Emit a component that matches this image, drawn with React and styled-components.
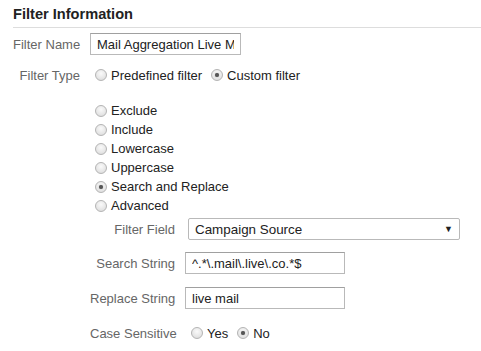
import React from 'react';
import styled, { createGlobalStyle } from 'styled-components';

const GlobalStyle = createGlobalStyle`
  body {
    margin: 0;
    background: #fff;
    font-family: "Liberation Sans", Arial, sans-serif;
  }
`;

const Panel = styled.div`
  padding: 4px 0 0 13px;
  font-size: 13px;
  color: #222;
`;

const Heading = styled.h2`
  margin: 0;
  height: 20px;
  line-height: 20px;
  font-size: 14.6px;
  font-weight: bold;
  color: #222;
  padding-bottom: 3px;
  border-bottom: 1px solid #ddd;
`;

const Row = styled.div`
  display: grid;
  grid-template-columns: ${(p) => p.labelWidth}px 1fr;
  column-gap: 10px;
  align-items: center;
  margin-top: ${(p) => p.top || 0}px;
`;

const Label = styled.label`
  text-align: right;
  color: #666;
  white-space: nowrap;
`;

const TextInput = styled.input`
  box-sizing: border-box;
  width: ${(p) => p.w}px;
  height: 22px;
  margin: 0;
  padding: 0 6px;
  border: 1px solid #b9b9b9;
  border-top-color: #a0a0a0;
  font: inherit;
  color: #222;
  outline: none;
`;

const Options = styled.div`
  display: flex;
  align-items: center;
`;

const RadioList = styled.div`
  display: flex;
  flex-direction: column;
`;

const Option = styled.label`
  display: flex;
  align-items: center;
  height: ${(p) => p.h || 22}px;
  margin-right: ${(p) => p.gap || 0}px;
  color: #222;
  white-space: nowrap;
`;

const Radio = styled.input.attrs({ type: 'radio' })`
  appearance: none;
  box-sizing: border-box;
  width: 12px;
  height: 12px;
  margin: 0 4px 0 ${(p) => p.left ?? 5}px;
  border-radius: 50%;
  border: 1px solid #b4b4b4;
  background: radial-gradient(circle at 50% 35%, #fafafa 0%, #e6e6e6 60%, #d6d6d6 100%);
  position: relative;
  &:checked::after {
    content: '';
    position: absolute;
    left: 3px;
    top: 3px;
    width: 4px;
    height: 4px;
    border-radius: 50%;
    background: #555;
    box-shadow: 0 0 1px #777;
  }
`;

const Sub = styled.div`
  margin-top: 3px;
`;

const SelectBox = styled.div`
  position: relative;
  width: 272px;
  margin-left: 3px;
`;

const Select = styled.select`
  appearance: none;
  box-sizing: border-box;
  width: 100%;
  height: 22px;
  margin: 0;
  padding: 0 6px;
  border: 1px solid #b9b9b9;
  border-radius: 2px;
  background: #fff;
  font: inherit;
  font-size: 13.4px;
  color: #222;
  outline: none;
`;

const Arrow = styled.span`
  position: absolute;
  right: 7px;
  top: 6px;
  font-size: 9px;
  line-height: 10px;
  color: #222;
  pointer-events: none;
`;

const typeOptions = ['Exclude', 'Include', 'Lowercase', 'Uppercase', 'Search and Replace', 'Advanced'];

export default function App() {
  return (
    <>
      <GlobalStyle />
      <Panel>
        <Heading>Filter Information</Heading>

        <Row labelWidth={67} top={5}>
          <Label>Filter Name</Label>
          <TextInput w={151} defaultValue="Mail Aggregation Live Mail" />
        </Row>

        <Row labelWidth={67} top={9}>
          <Label>Filter Type</Label>
          <Options>
            <Option gap={4}><Radio name="ftype" />Predefined filter</Option>
            <Option><Radio name="ftype" defaultChecked />Custom filter</Option>
          </Options>
        </Row>

        <Row labelWidth={67} top={15}>
          <span />
          <div>
            <RadioList>
              {typeOptions.map((o) => (
                <Option key={o} h={19}>
                  <Radio name="custom" defaultChecked={o === 'Search and Replace'} />
                  {o}
                </Option>
              ))}
            </RadioList>

            <Sub>
              <Row labelWidth={85}>
                <Label>Filter Field</Label>
                <SelectBox>
                  <Select defaultValue="Campaign Source">
                    <option>Campaign Source</option>
                    <option>Campaign Medium</option>
                    <option>Campaign Name</option>
                  </Select>
                  <Arrow>▼</Arrow>
                </SelectBox>
              </Row>

              <Row labelWidth={85} top={12}>
                <Label>Search String</Label>
                <TextInput w={160} defaultValue="^.*\.mail\.live\.co.*$" />
              </Row>

              <Row labelWidth={85} top={13}>
                <Label>Replace String</Label>
                <TextInput w={160} defaultValue="live mail" />
              </Row>

              <Row labelWidth={85} top={13}>
                <Label>Case Sensitive</Label>
                <Options>
                  <Option gap={4}><Radio name="case" left={6} />Yes</Option>
                  <Option><Radio name="case" defaultChecked />No</Option>
                </Options>
              </Row>
            </Sub>
          </div>
        </Row>
      </Panel>
    </>
  );
}
